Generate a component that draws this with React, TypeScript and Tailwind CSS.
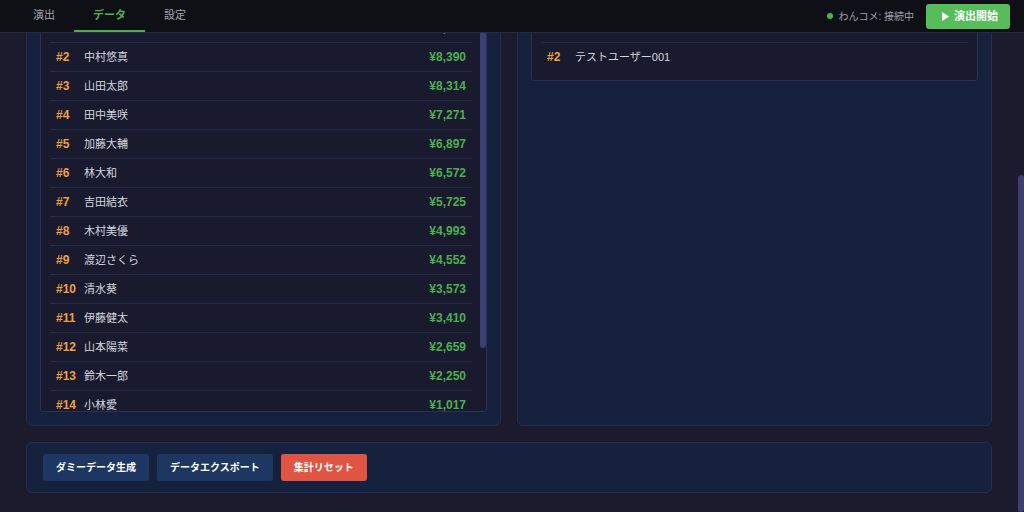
import { useLayoutEffect, useRef } from 'react'
import clsx from 'clsx'

const tabs = ['演出', 'データ', '設定']

const giftRanking = [
  { name: '佐藤翔太', amount: '¥9,120' },
  { name: '中村悠真', amount: '¥8,390' },
  { name: '山田太郎', amount: '¥8,314' },
  { name: '田中美咲', amount: '¥7,271' },
  { name: '加藤大輔', amount: '¥6,897' },
  { name: '林大和', amount: '¥6,572' },
  { name: '吉田結衣', amount: '¥5,725' },
  { name: '木村美優', amount: '¥4,993' },
  { name: '渡辺さくら', amount: '¥4,552' },
  { name: '清水葵', amount: '¥3,573' },
  { name: '伊藤健太', amount: '¥3,410' },
  { name: '山本陽菜', amount: '¥2,659' },
  { name: '鈴木一郎', amount: '¥2,250' },
  { name: '小林愛', amount: '¥1,017' },
  { name: '高橋蓮', amount: '¥820' },
  { name: '斎藤美月', amount: '¥500' },
]

const commentRanking = ['テストユーザー002', 'テストユーザー001']

const stats = [
  { label: '総ギフト額', value: '¥76,093' },
  { label: 'ギフト件数', value: '128' },
  { label: 'コメント数', value: '2' },
]

export default function App() {
  const mainRef = useRef<HTMLDivElement>(null)

  // the view is shown scrolled to the bottom of the data tab
  useLayoutEffect(() => {
    const el = mainRef.current
    if (el) el.scrollTop = el.scrollHeight
  }, [])

  return (
    <div className="flex h-screen flex-col bg-[#1b1b2d] font-['Liberation_Sans','Noto_Sans_CJK_JP',sans-serif] text-[12px] text-[#d3d6de]">
      <header className="flex h-[33px] shrink-0 items-stretch justify-between border-b border-[#262b47] bg-[#0f1015] px-[14px]">
        <nav className="flex">
          {tabs.map((t) => (
            <button
              key={t}
              className={clsx(
                'flex h-full items-center border-b-2 px-[19px] text-[11px]',
                t === 'データ' ? 'border-[#4caf50] font-bold text-[#4caf50]' : 'border-transparent text-[#a3a7b3]'
              )}
            >
              {t}
            </button>
          ))}
        </nav>
        <div className="flex items-center gap-3">
          <div className="flex items-center gap-[5px] text-[10px] text-[#9ca1ad]">
            <span className="h-[6px] w-[6px] rounded-full bg-[#4caf50]" />
            わんコメ: 接続中
          </div>
          <button className="flex h-[25px] items-center gap-[5px] rounded-[3px] bg-[#57bd5b] pl-4 pr-3 text-[11px] font-bold text-white">
            <svg width="7" height="9" viewBox="0 0 7 9"><polygon points="0,0 7,4.5 0,9" fill="white" /></svg>
            演出開始
          </button>
        </div>
      </header>

      <div className="flex min-h-0 flex-1">
        <main
          ref={mainRef}
          className="flex min-w-0 flex-1 flex-col gap-4 overflow-y-auto px-[26px] pt-5 pb-[19px] [scrollbar-width:none]"
        >
          <div className="grid h-[95px] shrink-0 grid-cols-3 gap-4">
            {stats.map((s) => (
              <div key={s.label} className="flex flex-col justify-center rounded-md border border-[#262d50] bg-[#16213e] px-4">
                <span className="text-[11px] text-[#9ca1ad]">{s.label}</span>
                <span className="mt-1 text-[22px] font-bold text-[#4caf50]">{s.value}</span>
              </div>
            ))}
          </div>

          <div className="grid shrink-0 grid-cols-2 gap-4">
            <section className="rounded-md border border-[#262d50] bg-[#16213e] p-[13px]">
              <h3 className="mb-[10px] text-[13px] font-bold leading-[18px] text-[#e5e7ee]">ギフトランキング</h3>
              <div className="flex h-[408px] rounded-[3px] border border-[#2a3156] bg-[#1a1a2e] pl-[9px]">
                <div className="min-w-0 flex-1 overflow-hidden py-[9px]">
                  {giftRanking.map((r, i) => (
                    <div key={r.name} className="flex items-center justify-between border-b border-[#272b4a] px-[6px] py-[7px] leading-[14px] last:border-b-0">
                      <div className="flex items-center gap-[6px]">
                        <span className="min-w-[22px] font-bold text-[#eda044]">#{i + 1}</span>
                        <span className="text-[11px]">{r.name}</span>
                      </div>
                      <span className="font-bold text-[#4caf50]">{r.amount}</span>
                    </div>
                  ))}
                </div>
                <div className="ml-2 w-[6px] shrink-0">
                  <div className="h-[343px] rounded-[3px] bg-[#3b4072]" />
                </div>
              </div>
            </section>

            <section className="rounded-md border border-[#262d50] bg-[#16213e] p-[13px]">
              <h3 className="mb-[10px] text-[13px] font-bold leading-[18px] text-[#e5e7ee]">コメントランキング</h3>
              <div className="rounded-[3px] border border-[#2a3156] bg-[#1a1a2e] p-[9px]">
                {commentRanking.map((name, i) => (
                  <div key={name} className="flex items-center gap-[6px] border-b border-[#272b4a] px-[6px] py-[7px] leading-[14px] last:border-b-0">
                    <span className="min-w-[22px] font-bold text-[#eda044]">#{i + 1}</span>
                    <span className="text-[11px]">{name}</span>
                  </div>
                ))}
              </div>
            </section>
          </div>

          <div className="flex shrink-0 gap-2 rounded-md border border-[#262d50] bg-[#16213e] px-4 py-[11px]">
            <button className="h-[27px] rounded-[3px] bg-[#1e3762] px-[13px] text-[10px] font-bold text-white">ダミーデータ生成</button>
            <button className="h-[27px] rounded-[3px] bg-[#1e3762] px-[13px] text-[10px] font-bold text-white">データエクスポート</button>
            <button className="h-[27px] rounded-[3px] bg-[#e05443] px-[13px] text-[10px] font-bold text-white">集計リセット</button>
          </div>
        </main>

        <div className="flex w-[6px] shrink-0 flex-col">
          <div className="h-[142px]" />
          <div className="flex-1 rounded-[3px] bg-[#3b3f72]" />
        </div>
      </div>
    </div>
  )
}
